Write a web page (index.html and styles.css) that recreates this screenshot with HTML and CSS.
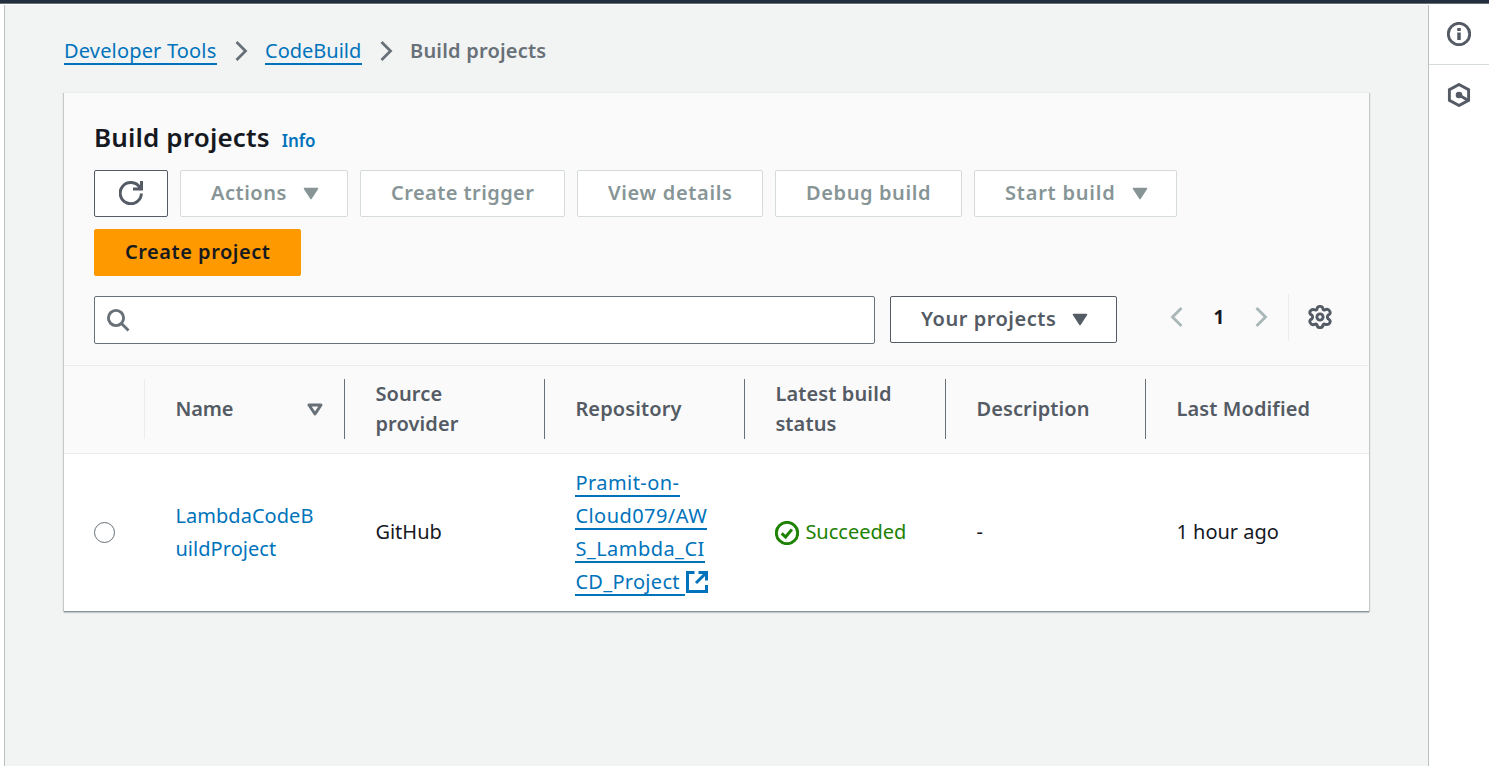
FILE: index.html
```html
<!DOCTYPE html>
<html lang="en">
<head>
<meta charset="utf-8">
<title>Build projects</title>
<link rel="stylesheet" href="styles.css">
</head>
<body>
<div class="topbar"></div>
<div class="shell">
  <main class="content">
    <nav class="crumbs">
      <a class="crumb-link crumb-tools">Developer Tools</a>
      <svg class="crumb-sep" viewBox="0 0 24 24"><path d="M7.500 3l9 9-9 9"/></svg>
      <a class="crumb-link crumb-build">CodeBuild</a>
      <svg class="crumb-sep" viewBox="0 0 24 24"><path d="M7.500 3l9 9-9 9"/></svg>
      <span class="crumb-current">Build projects</span>
    </nav>
    <section class="card">
      <header class="card-head">
        <div class="title-row"><h1 class="title">Build projects</h1><a class="info">Info</a></div>
        <div class="buttons">
          <button class="btn active refresh"><svg class="icon" viewBox="0 0 24 24"><path d="M22.400 12.500A10.600 10.600 0 1 1 20.800 6.500M22.500 0v8h-8.500" fill="none" stroke="currentColor" stroke-width="3"/></svg></button>
          <button class="btn actions"><span>Actions</span><svg class="caret" viewBox="0 0 16 13"><path d="M1.500 1.500h13L8 11.500z"/></svg></button>
          <button class="btn trigger"><span>Create trigger</span></button>
          <button class="btn details"><span>View details</span></button>
          <button class="btn debug"><span>Debug build</span></button>
          <button class="btn start"><span>Start build</span><svg class="caret" viewBox="0 0 16 13"><path d="M1.500 1.500h13L8 11.500z"/></svg></button>
          <button class="btn primary"><span>Create project</span></button>
        </div>
        <div class="filters">
          <div class="search"><svg class="icon" viewBox="0 0 24 24"><circle cx="10" cy="10" r="7.600"/><path d="M15.500 15.500l7 7"/></svg></div>
          <button class="btn active scope"><span>Your projects</span><svg class="caret" viewBox="0 0 16 13"><path d="M1.500 1.500h13L8 11.500z"/></svg></button>
          <div class="pager">
            <svg class="page-arrow" viewBox="0 0 24 24"><path d="M16.500 3l-9 9 9 9"/></svg>
            <span class="page">1</span>
            <svg class="page-arrow" viewBox="0 0 24 24"><path d="M7.500 3l9 9-9 9"/></svg>
          </div>
          <div class="settings"><svg class="icon" viewBox="0 0 24 24"><path d="M9 4.200Q9.200 1.400 12 1.400T15 4.200Q15.400 5.400 16.800 4.900Q20.200 3.300 21.700 6.100T20 10.200Q18.800 12 20 13.800Q23.200 15.500 21.700 17.900T16.800 19.100Q15.400 18.600 15 19.800Q14.800 22.600 12 22.600T9 19.800Q8.600 18.600 7.200 19.100Q3.800 20.700 2.300 17.900T4 13.800Q5.200 12 4 10.200Q.8 8.500 2.300 6.100T7.200 4.900Q8.600 5.400 9 4.200z"/><circle cx="12" cy="12" r="3.100"/></svg></div>
        </div>
      </header>
      <div class="row thead">
        <div class="cell"></div>
        <div class="cell name"><span>Name</span><svg class="caret sort" viewBox="0 0 16 13"><path d="M2 2h12L8 11z"/></svg></div>
        <div class="cell">Source<br>provider</div>
        <div class="cell">Repository</div>
        <div class="cell">Latest build<br>status</div>
        <div class="cell">Description</div>
        <div class="cell">Last Modified</div>
      </div>
      <div class="row tbody">
        <div class="cell pick"><span class="radio"></span></div>
        <div class="cell text"><a class="project">LambdaCodeB<br>uildProject</a></div>
        <div class="cell text">GitHub</div>
        <div class="cell"><div class="repo">
          <a class="repo-line">Pramit-on-</a>
          <a class="repo-line">Cloud079/AW</a>
          <a class="repo-line">S_Lambda_CI</a>
          <div class="repo-last"><a class="repo-line last">CD_Project</a><svg class="external" viewBox="0 0 22 22"><path d="M8.500 1.500h-7v19h19v-6.500M12.500 1.500h8v8M20 2L10 12"/></svg></div>
        </div></div>
        <div class="cell status"><svg class="icon" viewBox="0 0 24 24"><circle cx="12" cy="12" r="10.700"/><path d="M6.700 12.300l3.900 3.700 6.300-7.600" stroke-width="3"/></svg><span>Succeeded</span></div>
        <div class="cell text">-</div>
        <div class="cell text">1 hour ago</div>
      </div>
    </section>
  </main>
  <aside class="side">
    <div class="side-item"><svg class="icon" viewBox="0 0 24 24"><circle cx="12" cy="12" r="10.700"/><path d="M12 6v3M12 10.500V18" stroke-width="3.500"/></svg></div>
    <div class="side-item"><svg class="icon" viewBox="0 0 24 24"><path d="M12 1.500l9.600 5.200v10.600L12 22.500l-9.600-5.200V6.700z"/><circle class="dot" cx="12" cy="12" r="3.300"/><path d="M12 12l8.500 5" stroke-width="3"/></svg></div>
  </aside>
</div>
</body>
</html>
```
FILE: styles.css
```css
* { box-sizing: border-box; }
body {
  margin: 0;
  height: 766px;
  overflow: hidden;
  background: #fff;
  color: #16191f;
  font: 20px/33px "Noto Sans", sans-serif;
}
svg { flex: none; fill: none; }
.icon { width: 24px; height: 24px; stroke: currentColor; stroke-width: 2.9; }
.topbar { height: 4px; background: #232f3e; border-bottom: 1px solid #687078; }
.shell { display: flex; height: 762px; padding: 1px 0 0 5px; }
.content {
  width: 1423px;
  padding: 29px 59px 0;
  background: #f2f3f3;
  box-shadow: -1px 0 0 #b9c1c3, 1px 0 0 #b9c1c3;
}
.crumbs { display: flex; align-items: center; height: 34px; }
.crumb-link { height: 30px; line-height: 32px; color: #0073bb; border-bottom: 2px solid #0073bb; margin-bottom: 3px; white-space: nowrap; }
.crumb-tools { width: 153px; letter-spacing: 0.17px; }
.crumb-build { width: 97px; }
.crumb-sep { width: 24px; height: 24px; margin: 0 12px; stroke: #687078; stroke-width: 2.8; }
.crumb-current { color: #687078; font-weight: 600; letter-spacing: 0.2px; padding-bottom: 2px; }
.card {
  width: 1305px;
  height: 519px;
  margin-top: 24px;
  background: #fff;
  border-top: 1px solid #eaeded;
  box-shadow: 0 1px 0 #879596, 0 2px 1px #c3c9ca, -1px 1px 1px #c3c9ca, 1px 1px 1px #c3c9ca;
}
.card-head { height: 272px; padding: 27px 30px 0; background: #fafafa; }
.title-row { display: flex; align-items: baseline; gap: 12px; height: 50px; line-height: 34px; }
.title { margin: 0; font-size: 26px; font-weight: 600; letter-spacing: 0.15px; }
.info { color: #0073bb; font-size: 17px; font-weight: 600; }
.buttons { display: flex; flex-wrap: wrap; gap: 12px; }
.btn {
  display: flex;
  align-items: center;
  justify-content: space-between;
  height: 47px;
  padding: 0 20px 2px 30px;
  background: #fff;
  border: 1px solid #d5dbdb;
  border-radius: 2px;
  color: #879596;
  font: 600 20px/30px "Noto Sans", sans-serif;
  letter-spacing: 0.52px;
  white-space: nowrap;
}
.btn.active { color: #545b64; border-color: #545b64; }
.btn.refresh { width: 74px; padding: 0 0 1px; justify-content: center; }
.actions { width: 168px; padding-right: 28px; }
.trigger { width: 205px; letter-spacing: 0.43px; }
.details { width: 186px; letter-spacing: 0.67px; }
.debug { width: 187px; letter-spacing: 0.6px; }
.start { width: 203px; padding-right: 28px; letter-spacing: 0.78px; }
.primary { width: 207px; background: #f90; border-color: #f90; color: #16191f; }
.scope { width: 227px; margin-left: 15px; padding-right: 28px; }
.caret { width: 16px; height: 13px; fill: currentColor; stroke: currentColor; stroke-width: 1.5; stroke-linejoin: round; }
.btn .caret { margin-top: 2px; }
.filters { display: flex; height: 50px; margin-top: 20px; }
.search { width: 781px; height: 48px; padding: 11px; background: #fff; border: 1px solid #687078; border-radius: 2px; color: #687078; }
.pager { display: flex; align-items: center; gap: 24px; height: 42px; margin-left: 48px; font-size: 19px; font-weight: 700; }
.page { width: 12px; text-align: center; }
.page-arrow { width: 24px; height: 24px; stroke: #aab7b8; stroke-width: 2.9; }
.settings { height: 47px; margin: -2px 0 0 15px; padding: 11px 0 0 19px; border-left: 1px solid #eaeded; color: #545b64; }
.row { display: grid; grid-template-columns: 81px 200px 200px 200px 201px 200px 1fr; }
.cell { display: flex; align-items: center; padding-left: 30.400px; }
.thead { height: 89px; padding: 13px 0 14px; background: #fafafa; border-top: 1px solid #eaeded; border-bottom: 1px solid #eaeded; color: #545b64; font-weight: 600; line-height: 30px; letter-spacing: 0.12px; }
.thead .cell { border-right: 1px solid #687078; }
.thead .cell:first-child { border-color: #eaeded; }
.thead .cell:last-child { border: 0; }
.thead .name { justify-content: space-between; padding-right: 21px; letter-spacing: -0.1px; }
.sort { fill: none; stroke-width: 3; stroke: #687078; }
.tbody { height: 157px; }
.text { padding-bottom: 2px; }
.pick { padding-left: 30px; }
.radio { width: 21px; height: 21px; border: 1px solid #687078; border-radius: 50%; }
.project { color: #0073bb; letter-spacing: 0.05px; }
.repo { display: flex; flex-direction: column; align-items: flex-start; color: #0073bb; letter-spacing: 0.45px; }
.repo-line { height: 30px; line-height: 32px; margin-bottom: 3px; border-bottom: 2px solid #0073bb; white-space: nowrap; }
.repo-last { display: flex; height: 33px; }
.last { width: 110px; letter-spacing: 0.3px; }
.external { width: 22px; height: 22px; margin: 5px 0 0 1px; stroke: #0073bb; stroke-width: 3; }
.status { color: #1d8102; gap: 6px; }
.status span { padding-bottom: 2px; }
.side { width: 60px; margin-left: 1px; background: #fff; color: #545b64; }
.side-item { display: flex; align-items: center; justify-content: center; height: 60px; }
.side-item:first-child { border-bottom: 1px solid #d5dbdb; padding-bottom: 1px; }
.dot { fill: currentColor; stroke: none; }
```
